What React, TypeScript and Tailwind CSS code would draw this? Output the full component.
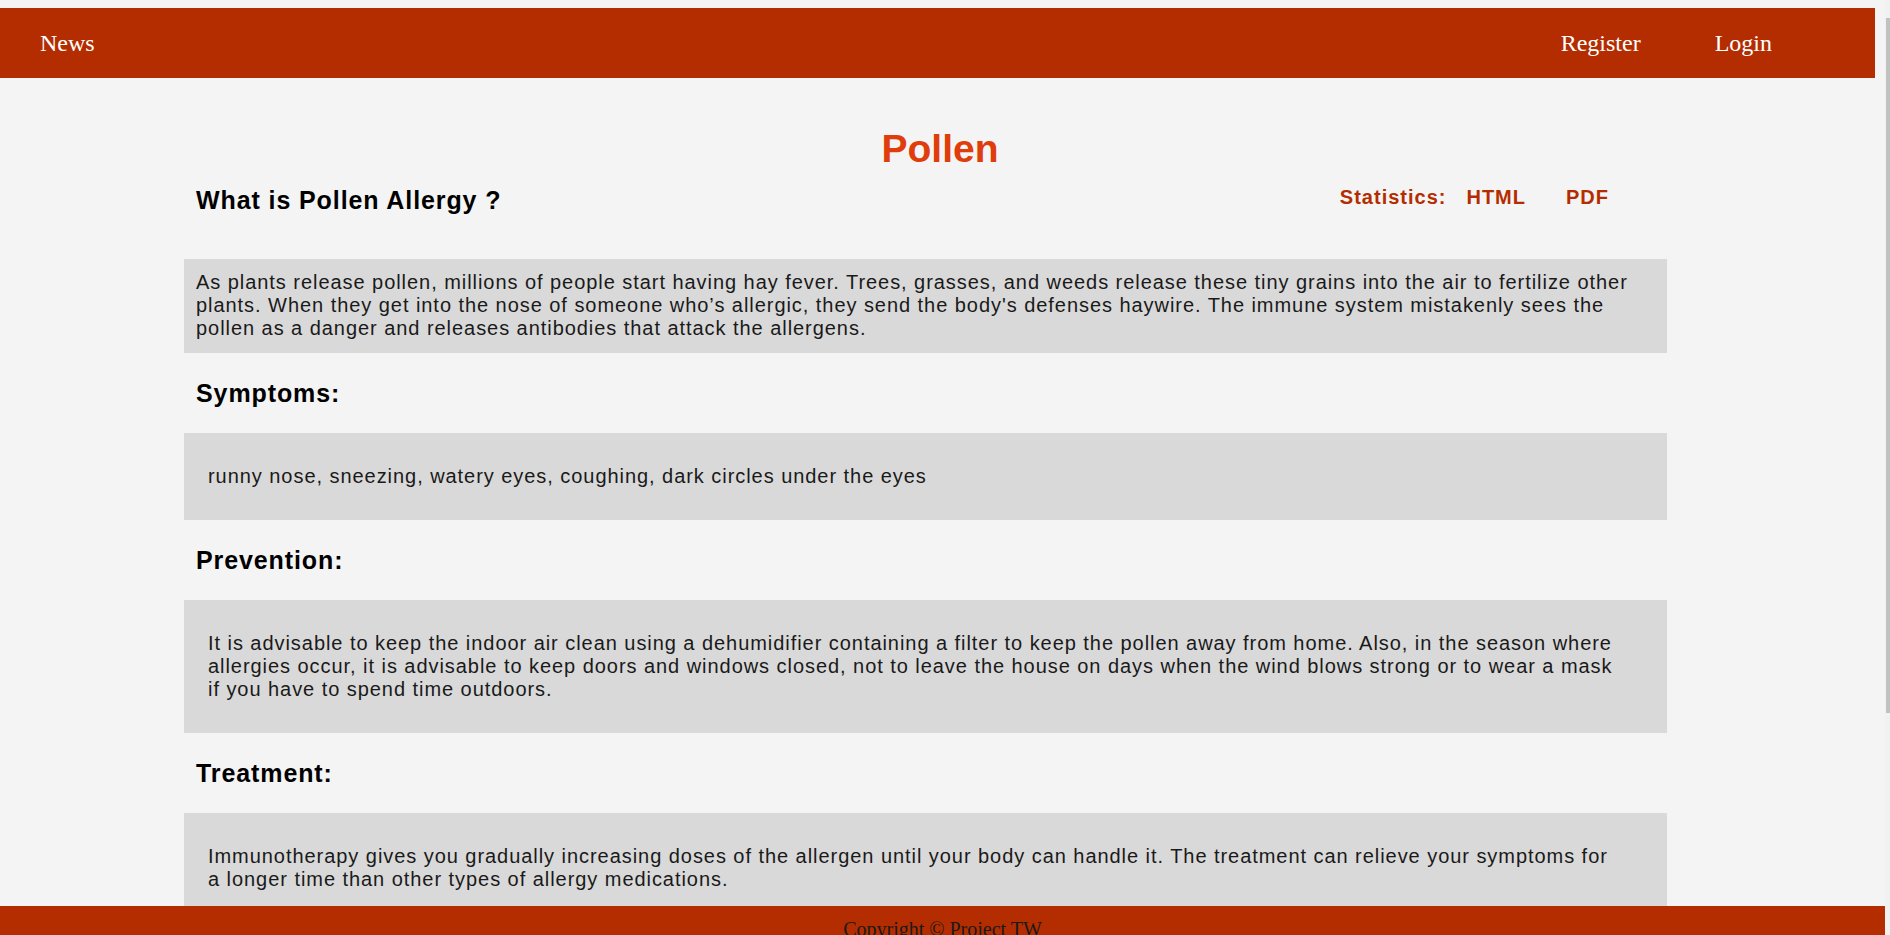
const sections = [
  {
    title: "Symptoms:",
    text: "runny nose, sneezing, watery eyes, coughing, dark circles under the eyes",
  },
  {
    title: "Prevention:",
    text: "It is advisable to keep the indoor air clean using a dehumidifier containing a filter to keep the pollen away from home. Also, in the season where allergies occur, it is advisable to keep doors and windows closed, not to leave the house on days when the wind blows strong or to wear a mask if you have to spend time outdoors.",
  },
  {
    title: "Treatment:",
    text: "Immunotherapy gives you gradually increasing doses of the allergen until your body can handle it. The treatment can relieve your symptoms for a longer time than other types of allergy medications.",
  },
];

const Header = () => (
  <div className="pt-2 pr-[10px]">
    <header className="flex h-[70px] items-center justify-between bg-[#b32d00] pl-10 pr-[103px] font-['Liberation_Serif','Times_New_Roman',serif] text-[24px] text-white">
      <a href="#">News</a>
      <nav className="flex gap-[74px]">
        <a href="#">Register</a>
        <a href="#">Login</a>
      </nav>
    </header>
  </div>
);

const App = () => {
  return (
    <div className="flex h-screen w-full overflow-hidden bg-[#f4f4f4]">
      <div className="flex min-w-0 flex-1 flex-col">
        <Header />

        <main className="min-h-0 flex-1 overflow-hidden pr-[10px] font-['Liberation_Sans',Arial,sans-serif] text-[#1a1a1a]">
          <h1 className="mt-[49px] pl-[5px] text-center text-[39px] leading-[44px] font-bold text-[#df3d0b]">
            Pollen
          </h1>

          <div className="ml-[184px] w-[1483px]">
            <div className="mt-[10px] flex items-start justify-between">
              <h2 className="pt-[5px] pl-3 text-[25px] leading-[28px] font-bold tracking-[0.9px] text-black">
                What is Pollen Allergy ?
              </h2>
              <div className="pt-[2px] pr-[58px] text-[20px] leading-[28px] font-bold tracking-[1px] text-[#b32d00]">
                <span>Statistics:</span>
                <a href="#" className="ml-[20px]">
                  HTML
                </a>
                <a href="#" className="ml-[40px]">
                  PDF
                </a>
              </div>
            </div>

            <p className="mt-[45px] bg-[#d9d9d9] px-3 pt-3 pb-[13px] text-[20px] leading-[23px] tracking-[0.95px]">
              As plants release pollen, millions of people start having hay
              fever. Trees, grasses, and weeds release these tiny grains into
              the air to fertilize other plants. When they get into the nose of
              someone who’s allergic, they send the body's defenses haywire.
              The immune system mistakenly sees the pollen as a danger and
              releases antibodies that attack the allergens.
            </p>

            {sections.map((s) => (
              <section key={s.title}>
                <h3 className="my-[26px] pl-3 text-[25px] leading-[28px] font-bold tracking-[0.9px] text-black">
                  {s.title}
                </h3>
                <div className="bg-[#d9d9d9] py-8 pl-6 pr-12 text-[20px] leading-[23px] tracking-[0.95px]">
                  {s.text}
                </div>
              </section>
            ))}
          </div>
        </main>

        <footer className="h-[29px] shrink-0 overflow-hidden bg-[#b32d00] pt-3 text-center font-['Liberation_Serif','Times_New_Roman',serif] text-[20px] leading-[23px] text-[#1a1a1a]">
          Copyright © Project TW
        </footer>
      </div>

      <div className="w-[5px] shrink-0 bg-[#f1f1f1]">
        <div className="mt-[18px] ml-px h-[695px] w-[4px] bg-[#c1c1c1]" />
      </div>
    </div>
  );
};

export default App;
